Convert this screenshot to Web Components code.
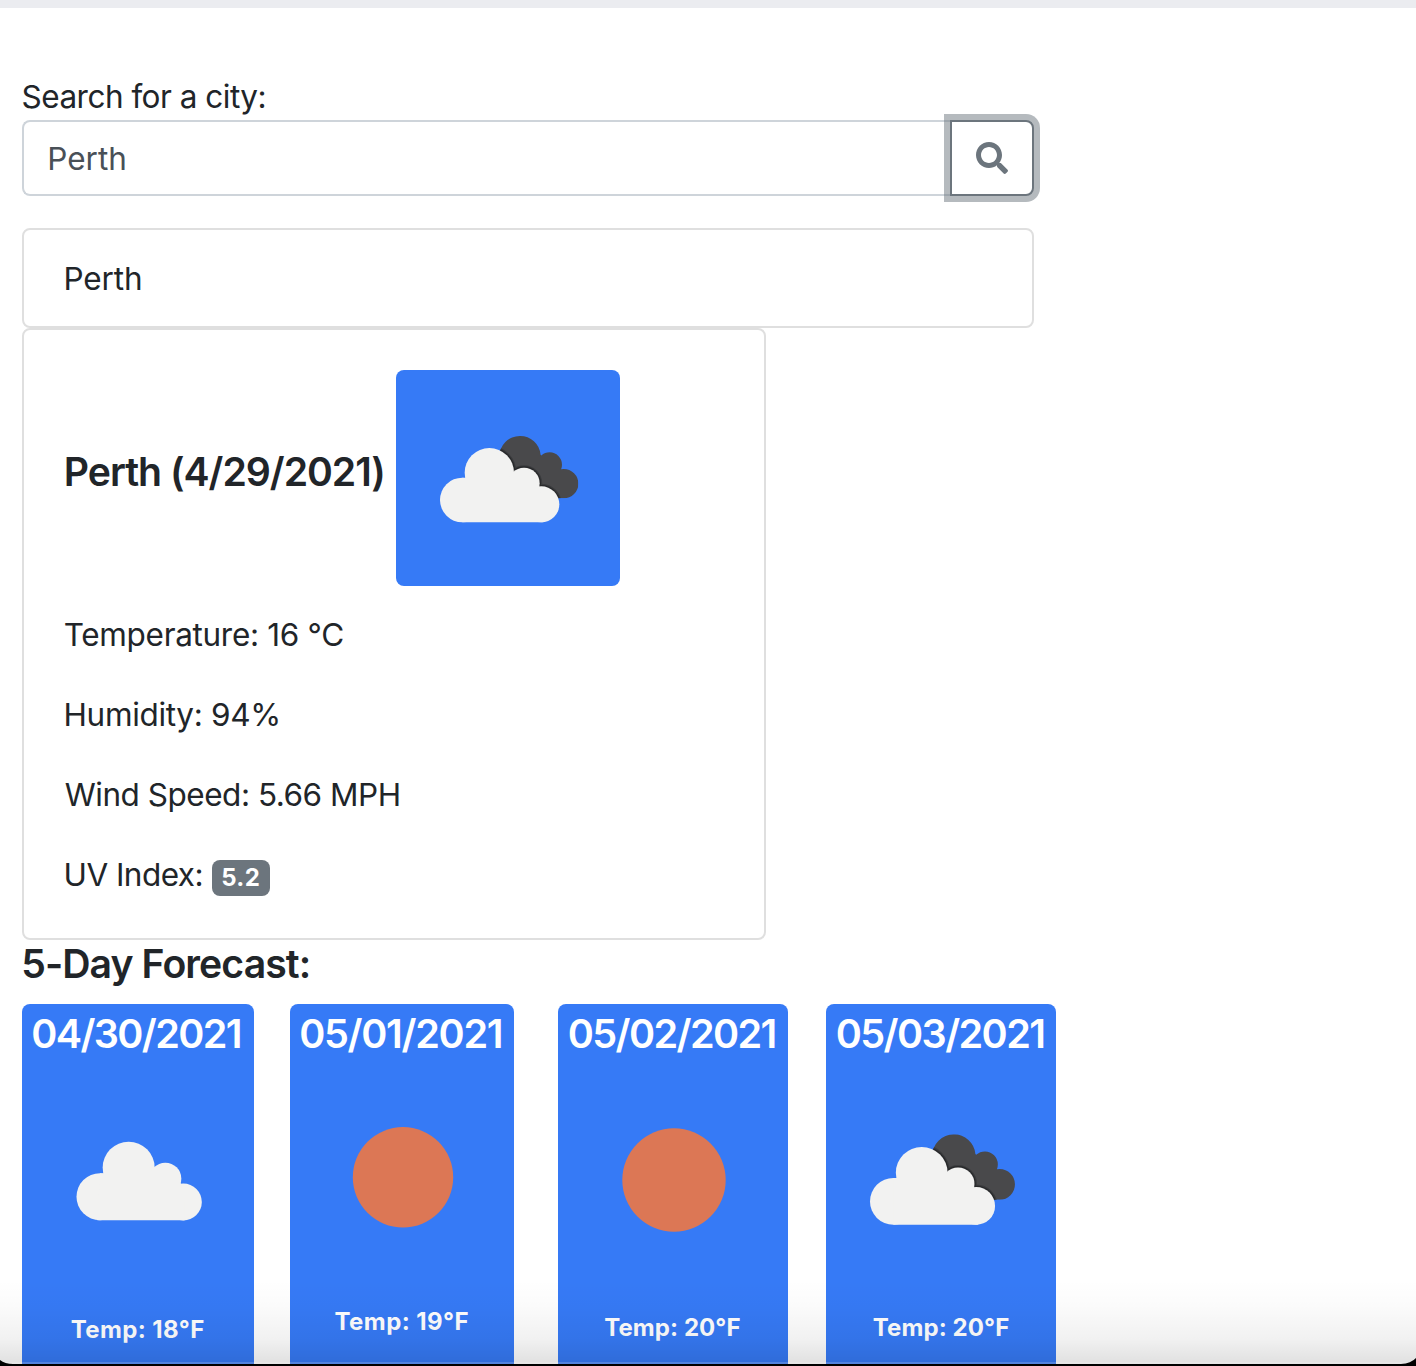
<!DOCTYPE html>
<html lang="en">
<head>
<meta charset="utf-8">
<title>Weather Dashboard</title>
<style>
html,body{margin:0;height:1366px;overflow:hidden;background:#fff}
</style>
</head>
<body>
<weather-app></weather-app>
<script>
const define = (name, html, setup) => customElements.define(name, class extends HTMLElement {
  connectedCallback() {
    if (this.shadowRoot) return;
    const root = this.attachShadow({mode: 'open'});
    root.innerHTML = typeof html === 'function' ? html(this) : html;
    if (setup) setup(this, root);
  }
});

/* Text whose tracking is set from its visible width; lead is its left side bearing. */
define('fit-text', '<style>:host{display:inline-block;white-space:pre}</style><slot></slot>', el => {
  const text = el.textContent, cs = getComputedStyle(el);
  const ctx = document.createElement('canvas').getContext('2d');
  ctx.font = `${cs.fontWeight} ${cs.fontSize} ${cs.fontFamily}`;
  const m = ctx.measureText(text);
  const spacing = (Number(el.getAttribute('ink')) - m.actualBoundingBoxRight - m.actualBoundingBoxLeft) / (text.length - 1);
  el.style.letterSpacing = spacing.toFixed(3) + 'px';
  el.style.marginLeft = (Number(el.getAttribute('lead')) + m.actualBoundingBoxLeft - .5).toFixed(2) + 'px';
});

const whiteCloud = () => `<circle cx="247" cy="420" r="67"/><circle cx="328" cy="338" r="74"/><circle cx="432" cy="370" r="47"/><circle cx="484" cy="433" r="54"/><path d="M247 353H400L432 340L478 380L490 433V487H247Z"/>`;
const brokenClouds = `<defs><clipPath id="dark"><circle cx="420" cy="290" r="62"/><circle cx="509" cy="314" r="37"/><circle cx="551" cy="371" r="44"/><path d="M380 300L470 270L520 330L551 415L480 415Z"/></clipPath></defs>
<g clip-path="url(#dark)"><rect x="340" y="220" width="270" height="210" fill="#49494b"/><g stroke="#3a3b3d" stroke-width="15">${whiteCloud()}</g><g stroke="#28292b" stroke-width="8">${whiteCloud()}</g></g>
<g fill="#f2f2f1">${whiteCloud()}</g>`;
const icons = {
  broken: `<g transform="translate(-16 -10) scale(.33333)">${brokenClouds}</g>`,
  brokenSmall: `<g transform="translate(-16 -60) scale(.33333) translate(180 403) scale(1.048) translate(-180 -228)">${brokenClouds}</g>`,
  cloud: `<g transform="translate(-22 40) scale(.33333)" fill="#f2f2f1"><circle cx="300" cy="290" r="70.5"/><circle cx="386" cy="203" r="78"/><circle cx="496" cy="236" r="48"/><circle cx="550" cy="306" r="55.5"/><path d="M300 220H460L496 205L542 250L554 306V361H292Z"/></g>`,
  sun2: '<circle cx="113" cy="117.3" r="50.2" fill="#dc7755"/>',
  sun3: '<circle cx="116" cy="120" r="51.700" fill="#dc7755"/>'
};

define('weather-icon', el => `<style>:host{display:block}svg{display:block;width:100%;height:100%}</style><svg>${icons[el.getAttribute('kind')]}</svg>`);

define('search-bar', `<style>
:host{display:block}
.label{box-sizing:border-box;line-height:48px;height:48px;padding-top:1px}
.row{display:flex;height:76px}
.input{flex:1;box-sizing:border-box;border:2px solid #ced4da;border-right:0;border-radius:8px 0 0 8px;padding:13px 24px 0;line-height:48px;color:#495057}
button{box-sizing:border-box;width:84px;height:76px;padding:0;margin:0;background:#fff;border:2px solid #6c757d;border-radius:0 8px 8px 0;box-shadow:0 0 0 6px rgba(108,117,125,.5);display:flex;align-items:center;justify-content:center}
svg{width:32px;height:32px;fill:#6c757d;display:block}
</style>
<div class="label"><fit-text lead="1" ink="242">Search for a city:</fit-text></div>
<div class="row"><div class="input"><fit-text lead="1.7" ink="76">Perth</fit-text></div>
<button aria-label="Search"><svg viewBox="0 0 512 512"><path d="M505 442.700L405.300 343c-4.500-4.500-10.600-7-17-7H372c27.600-35.300 44-79.700 44-128C416 93.100 322.900 0 208 0S0 93.100 0 208s93.100 208 208 208c48.300 0 92.700-16.400 128-44v16.300c0 6.400 2.500 12.500 7 17l99.700 99.700c9.400 9.400 24.600 9.400 33.900 0l28.300-28.300c9.400-9.400 9.400-24.600.1-34zM208 336c-70.700 0-128-57.200-128-128 0-70.700 57.200-128 128-128 70.700 0 128 57.200 128 128 0 70.700-57.200 128-128 128z"/></svg></button></div>`);

define('outline-card', '<style>:host{display:block;box-sizing:border-box;border:2px solid #dfdfdf;border-radius:8px;background:#fff}</style><slot></slot>');

define('current-weather', `<style>
:host{display:block}
outline-card{width:744px;height:612px;padding:40px}
.title{display:flex;align-items:flex-start;height:216px;font-size:39.2px;font-weight:600}
.title div{width:332px;line-height:48px;padding-top:78px}
weather-icon{width:224px;height:216px;background:#367af6;border-radius:8px}
.facts{display:flex;flex-direction:column;gap:32px;padding-top:25px}
.facts div{height:48px;line-height:48px;display:flex}
.badge{box-sizing:border-box;margin:9px 0 0 9px;width:58px;height:36px;line-height:36px;border-radius:8px;background:#6c757d;color:#fff;font-size:24px;font-weight:750;padding-left:10px}
.uv{width:139px;white-space:nowrap}
</style>
<outline-card><div class="title"><div><fit-text lead="2.3" ink="317">Perth (4/29/2021)</fit-text></div><weather-icon kind="broken"></weather-icon></div>
<div class="facts"><div><fit-text lead="1.2" ink="278.5">Temperature: 16 °C</fit-text></div><div><fit-text lead="2" ink="212.7">Humidity: 94%</fit-text></div><div><fit-text lead="1.2" ink="334">Wind Speed: 5.66 MPH</fit-text></div><div><span class="uv"><fit-text lead="2" ink="136">UV Index:</fit-text></span><span class="badge"><fit-text lead=".7" ink="36.5">5.2</fit-text></span></div></div></outline-card>`);

define('forecast-card', el => {
  const a = n => el.getAttribute(n);
  return `<style>
:host{display:block;box-sizing:border-box;width:${a('w')}px;height:362px;background:#367af6;color:#fff;border-radius:8px 8px 0 0;overflow:hidden}
.date{box-sizing:border-box;height:56px;padding-top:2px;line-height:56px;font-size:39.6px;font-weight:600}
weather-icon{height:${a('h')}px}
.temp{height:36px;padding-top:1px;line-height:36px;font-size:24px;font-weight:750}
</style><div class="date"><fit-text lead="${a('dl')}" ink="${a('di')}">${a('date')}</fit-text></div><weather-icon kind="${a('icon')}"></weather-icon><div class="temp"><fit-text lead="${a('tl')}" ink="${a('ti')}">Temp: ${a('temp')}°F</fit-text></div>`;
});

define('window-edge', `<style>
:host{display:block;position:absolute;left:0;right:0;bottom:0;height:86px;overflow:hidden;pointer-events:none}
.shade{height:84px;background:linear-gradient(to bottom,rgba(0,0,0,0),rgba(0,0,0,.014) 30%,rgba(0,0,0,.055) 70%,rgba(0,0,0,.12))}
.glow{position:absolute;left:0;right:0;bottom:2px;height:2px;background:rgba(255,255,255,.17)}
svg{position:absolute;left:0;bottom:0;width:1416px;height:10px}
</style><div class="shade"></div><div class="glow"></div><svg viewBox="0 0 1416 10"><path d="M0 4Q5 8 13 8H1401Q1411 7.500 1416 2V10H0Z"/></svg>`);

define('weather-app', `<style>
:host{display:block;position:relative;height:1366px;overflow:hidden;background:#fff;color:#212529;font:400 31.5px/48px Inter,"Liberation Sans",sans-serif}
.bar{height:8px;background:#ebecf0}
main{padding:64px 0 0 22px}
search-bar{width:1012px;margin-bottom:32px}
.history{width:1012px;height:100px;padding:25px 40px 0}
h4{margin:0;font-size:39.2px;line-height:48px;height:64px;font-weight:600}
.days{display:grid;grid-template-columns:repeat(4,268px)}
</style><div class="bar"></div><main><search-bar></search-bar><outline-card class="history"><fit-text lead="1.9" ink="75.7">Perth</fit-text></outline-card>
<current-weather></current-weather><h4><fit-text lead="1.7" ink="285.5">5-Day Forecast:</fit-text></h4>
<div class="days">
<forecast-card w="232" h="251" date="04/30/2021" dl="10.7" di="207.600" icon="cloud" temp="18" tl="49.3" ti="133.4"></forecast-card>
<forecast-card w="224" h="243" date="05/01/2021" dl="10.7" di="200.6" icon="sun2" temp="19" tl="45" ti="134"></forecast-card>
<forecast-card w="230" h="249" date="05/02/2021" dl="11.3" di="205.7" icon="sun3" temp="20" tl="46.7" ti="136.3"></forecast-card>
<forecast-card w="230" h="249" date="05/03/2021" dl="11.3" di="206.4" icon="brokenSmall" temp="20" tl="47.3" ti="136.4"></forecast-card>
</div></main><window-edge></window-edge>`);
</script>
</body>
</html>
